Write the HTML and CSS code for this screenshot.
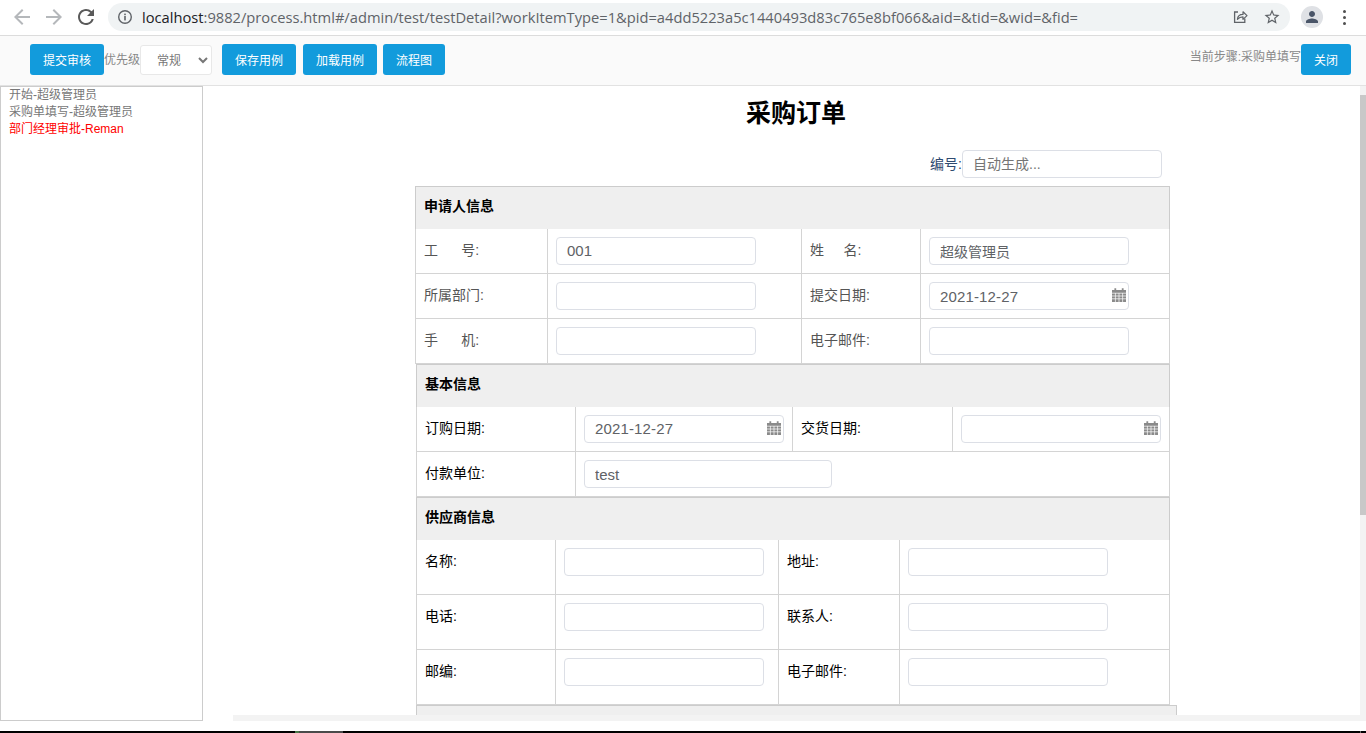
FILE: index.html
```html
<!DOCTYPE html>
<html lang="zh-CN">
<head>
<meta charset="utf-8">
<title>采购订单</title>
<link rel="stylesheet" href="styles.css">
</head>
<body>
<header class="chrome">
  <svg class="nav nav-off" viewBox="0 0 24 24"><path d="M20 11H7.83l5.59-5.59L12 4l-8 8 8 8 1.41-1.41L7.83 13H20v-2z"/></svg>
  <svg class="nav nav-off" viewBox="0 0 24 24"><path d="M4 11h12.17l-5.59-5.59L12 4l8 8-8 8-1.41-1.41L16.17 13H4v-2z"/></svg>
  <svg class="nav nav-on" viewBox="0 0 24 24"><path d="M17.65 6.35A7.958 7.958 0 0 0 12 4c-4.42 0-7.99 3.58-7.99 8s3.57 8 7.99 8c3.73 0 6.84-2.55 7.73-6h-2.08A5.99 5.99 0 0 1 12 18c-3.31 0-6-2.69-6-6s2.69-6 6-6c1.66 0 3.14.69 4.22 1.78L13 11h7V4l-2.35 2.35z"/></svg>
  <div class="omnibox">
    <svg class="info" viewBox="0 0 16 16"><circle cx="8" cy="8" r="6.3" fill="none" stroke="#5f6368" stroke-width="1.4"/><rect x="7.2" y="7" width="1.6" height="4.4" fill="#5f6368"/><rect x="7.2" y="4.6" width="1.6" height="1.6" fill="#5f6368"/></svg>
    <div class="url"><span class="host">localhost</span>:9882/process.html#/admin/test/testDetail?workItemType=1&amp;pid=a4dd5223a5c1440493d83c765e8bf066&amp;aid=&amp;tid=&amp;wid=&amp;fid=</div>
    <svg class="omni-icon" viewBox="0 0 16 16"><path d="M6 3H2.6v10.4h10.2V9.6" fill="none" stroke="#5f6368" stroke-width="1.3"/><path d="M5.4 10.4c.3-3.3 2.6-5 5.6-5V2.8l4 3.8-4 3.8V7.8c-2.3 0-4 .7-5.6 2.6z" fill="none" stroke="#5f6368" stroke-width="1.2" stroke-linejoin="round"/></svg>
    <svg class="omni-icon star" viewBox="0 0 24 24"><path fill="#5f6368" d="M22 9.24l-7.19-.62L12 2 9.19 8.63 2 9.24l5.46 4.73L5.82 21 12 17.27 18.18 21l-1.63-7.03L22 9.24zM12 15.4l-3.76 2.27 1-4.28-3.32-2.88 4.38-.38L12 6.1l1.71 4.04 4.38.38-3.32 2.88 1 4.28L12 15.4z"/></svg>
  </div>
  <div class="avatar"><svg viewBox="0 0 24 24"><path fill="#4a5568" d="M12 12c2.21 0 4-1.79 4-4s-1.79-4-4-4-4 1.79-4 4 1.79 4 4 4zm0 2c-2.67 0-8 1.34-8 4v2h16v-2c0-2.66-5.33-4-8-4z"/></svg></div>
  <div class="kebab"><i></i><i></i><i></i></div>
</header>

<div class="toolbar">
  <button class="btn">提交审核</button>
  <span class="muted">优先级</span>
  <select class="priority"><option>常规</option></select>
  <button class="btn btn-gap-l">保存用例</button>
  <button class="btn btn-gap-m">加载用例</button>
  <button class="btn btn-gap-s">流程图</button>
  <span class="step">当前步骤:采购单填写</span>
  <button class="btn btn-close">关闭</button>
</div>

<div class="workspace">
  <aside class="steps">
    <div>开始-超级管理员</div>
    <div>采购单填写-超级管理员</div>
    <div class="current">部门经理审批-Reman</div>
  </aside>
  <div class="pane">
    <div class="pane-col">
      <main class="viewport">
        <div class="sheet">
          <h1 class="title">采购订单</h1>
          <div class="serial"><label class="serial-label">编号:</label><input class="field" placeholder="自动生成..."></div>

          <table class="form form-a">
            <colgroup><col class="a1"><col class="a2"><col class="a3"><col class="a4"></colgroup>
            <tr><th colspan="4">申请人信息</th></tr>
            <tr>
              <td>工&nbsp;&nbsp;&nbsp;&nbsp;&nbsp;&nbsp;号:</td><td><input class="field field-latin" value="001"></td>
              <td>姓&nbsp;&nbsp;&nbsp;&nbsp;&nbsp;名:</td><td><input class="field" value="超级管理员"></td>
            </tr>
            <tr>
              <td>所属部门:</td><td><input class="field"></td>
              <td>提交日期:</td>
              <td><div class="date"><input class="field field-latin field-date" value="2021-12-27"><svg class="cal" viewBox="0 0 14 14"><use href="#cal"/></svg></div></td>
            </tr>
            <tr>
              <td>手&nbsp;&nbsp;&nbsp;&nbsp;&nbsp;&nbsp;机:</td><td><input class="field"></td>
              <td>电子邮件:</td><td><input class="field"></td>
            </tr>
          </table>

          <table class="form form-b">
            <colgroup><col class="b1"><col class="b2"><col class="b3"><col class="b4"></colgroup>
            <tr><th colspan="4">基本信息</th></tr>
            <tr>
              <td>订购日期:</td>
              <td><div class="date"><input class="field field-latin field-date" value="2021-12-27"><svg class="cal" viewBox="0 0 14 14"><use href="#cal"/></svg></div></td>
              <td>交货日期:</td>
              <td><div class="date"><input class="field"><svg class="cal" viewBox="0 0 14 14"><use href="#cal"/></svg></div></td>
            </tr>
            <tr>
              <td>付款单位:</td>
              <td colspan="3"><input class="field field-latin field-wide" value="test"></td>
            </tr>
          </table>

          <table class="form form-c">
            <colgroup><col class="c1"><col class="c2"><col class="c3"><col class="c4"></colgroup>
            <tr><th colspan="4">供应商信息</th></tr>
            <tr><td>名称:</td><td><input class="field"></td><td>地址:</td><td><input class="field"></td></tr>
            <tr><td>电话:</td><td><input class="field"></td><td>联系人:</td><td><input class="field"></td></tr>
            <tr><td>邮编:</td><td><input class="field"></td><td>电子邮件:</td><td><input class="field"></td></tr>
          </table>

          <div class="next-section"></div>
        </div>
      </main>
      <div class="hbar"></div>
    </div>
    <div class="vbar"><div class="vthumb"></div></div>
  </div>
</div>

<footer class="taskbar"><span class="task"></span><span class="tray"></span></footer>

<svg class="defs" width="0" height="0"><defs><g id="cal"><path fill="#8a8a8a" d="M0 2h2.4V.3h1.8V2h5.6V.3h1.8V2H14v12H0z"/><path fill="none" stroke="#fff" stroke-width=".7" d="M0 5.2h14M0 8h14M0 10.8h14M3.4 5v9M7 5v9M10.6 5v9"/></g></defs></svg>
</body>
</html>
```

FILE: styles.css
```css
* { box-sizing: border-box; }
html, body { margin: 0; height: 733px; overflow: hidden; }
body {
  display: flex;
  flex-direction: column;
  background: #fff;
  font-family: "Liberation Sans", "Noto Sans CJK SC", sans-serif;
  font-size: 14px;
  color: #333;
}

/* browser chrome */
.chrome {
  height: 36px;
  flex: none;
  display: flex;
  align-items: center;
  padding: 0 0 1px 10px;
  border-bottom: 1px solid #dcdcdc;
  background: #fff;
}
.nav { width: 24px; height: 24px; flex: none; margin-right: 8px; }
.nav-off { fill: #b5b8bb; }
.nav-on { fill: #5a5a5a; margin-right: 10px; }
.omnibox {
  width: 1182px;
  height: 28px;
  flex: none;
  display: flex;
  align-items: center;
  border-radius: 14px;
  background: #f0f3f4;
  padding: 0 9px;
}
.info { width: 16px; height: 16px; flex: none; }
.url {
  flex: 1;
  margin-left: 9px;
  font-family: "Open Sans", sans-serif;
  font-size: 14.7px;
  color: #5f6368;
  white-space: nowrap;
  overflow: hidden;
}
.host { color: #202124; }
.omni-icon { width: 16px; height: 16px; flex: none; margin-left: 15px; }
.star { width: 18px; height: 18px; }
.avatar {
  width: 22px;
  height: 22px;
  flex: none;
  margin-left: 11px;
  border-radius: 50%;
  background: #dfe1e5;
  display: flex;
  align-items: center;
  justify-content: center;
}
.avatar svg { width: 18px; height: 18px; }
.kebab {
  flex: none;
  margin-left: 20px;
  display: flex;
  flex-direction: column;
  gap: 3px;
}
.kebab i { display: block; width: 3px; height: 3px; border-radius: 50%; background: #4f4f4f; }

/* toolbar */
.toolbar {
  height: 50px;
  flex: none;
  display: flex;
  align-items: flex-start;
  padding: 8px 15px 0 30px;
  background: #fafafa;
  border-bottom: 1px solid #e2e2e2;
}
.btn {
  height: 31px;
  padding: 0 13px;
  border: 0;
  border-radius: 3px;
  background: #129bdc;
  color: #fff;
  font: inherit;
  font-size: 12px;
}
.muted { font-size: 12px; color: #888; line-height: 32px; width: 36px; }
.priority {
  width: 72px;
  height: 30px;
  margin-top: 1px;
  padding: 2px 0 0 12px;
  border: 1px solid #e8e8e8;
  border-radius: 3px;
  background-color: #fff;
  color: #777;
  font: inherit;
  font-size: 12px;
}
.btn-gap-l { margin-left: 10px; }
.btn-gap-m { margin-left: 7px; }
.btn-gap-s { margin-left: 6px; }
.step { margin-left: auto; font-size: 12px; color: #888; line-height: 27px; }
.btn-close { width: 50px; padding: 0; }

/* work area */
.workspace { height: 635px; flex: none; display: flex; }
.steps {
  width: 203px;
  flex: none;
  padding: 0 8px;
  border: 1px solid #ccc;
  font-size: 12px;
  line-height: 17px;
  color: #777;
}
.current { color: #f00; }
.pane { flex: 1; min-width: 0; margin-left: 30px; display: flex; }
.pane-col { flex: 1; min-width: 0; display: flex; flex-direction: column; }
.viewport { flex: 1; min-height: 0; overflow: hidden; }
.hbar { height: 6px; flex: none; background: #f3f3f3; }
.vbar { width: 6px; flex: none; padding-top: 9px; background: #f3f3f3; }
.vthumb { height: 420px; background: #c8c8c8; }

.sheet { width: 761px; margin: 0 auto; }
.title {
  margin: 0 0 0 -1px;
  padding-top: 10px;
  height: 64px;
  text-align: center;
  font-size: 25px;
  line-height: 34px;
  color: #000;
}
.serial {
  display: flex;
  justify-content: flex-end;
  align-items: center;
  height: 28px;
  padding-right: 15px;
  margin-bottom: 8px;
  color: #2f4a70;
}
.serial-label { padding-bottom: 2px; }
.field {
  display: block;
  width: 200px;
  height: 28px;
  padding: 0 10px;
  border: 1px solid #dcdfe6;
  border-radius: 4px;
  background: #fff;
  color: #606266;
  font: inherit;
  font-size: 14px;
}
.field::placeholder { color: #757575; opacity: 1; }
.field-latin { font-size: 15px; }
.field-wide { width: 248px; }
.field-date { letter-spacing: .15px; }
.date { position: relative; width: 200px; }
.cal { position: absolute; right: 3px; top: 6px; width: 14px; height: 14px; }
.defs { position: absolute; }

/* form tables */
.form {
  table-layout: fixed;
  border-collapse: collapse;
  width: 753px;
  border: 1px solid #ccc;
  color: #000;
}
.form th {
  height: 42px;
  padding: 0 8px 5px;
  background: #efefef;
  color: #000;
  text-align: left;
  font-size: 14px;
  border: 0;
}
.form td {
  padding: 8px;
  border: 1px solid #d4d4d4;
  vertical-align: middle;
}
.form tr:nth-child(2) td { border-top: 0; }
.form td:nth-child(odd) { padding-bottom: 12px; }
.form-a { margin-left: -1px; width: 754px; color: #555; }
.form-a tr:not(:first-child) { height: 45px; }
.form-b tr:not(:first-child) { height: 45px; }
.form-c tr:not(:first-child) { height: 55px; }
.form-c td { vertical-align: top; }
.form-c td:nth-child(odd) { line-height: 26px; }
.a1 { width: 132px; } .a2 { width: 254px; } .a3 { width: 119px; } .a4 { width: 249px; }
.b1 { width: 159px; } .b2 { width: 217px; } .b3 { width: 160px; } .b4 { width: 217px; }
.c1 { width: 139px; } .c2 { width: 223px; } .c3 { width: 121px; } .c4 { width: 270px; }
.next-section {
  height: 60px;
  background: #efefef;
  border: 1px solid #ccc;
}

/* desktop strip */
.taskbar { margin-top: 10px; height: 2px; flex: none; background: #000; display: flex; }
.task { width: 48px; margin-left: 295px; background: #4a4a4a; border-left: 4px solid #4a7a4a; }
.tray { width: 1px; margin-left: auto; margin-right: 5px; background: #666; }
```
